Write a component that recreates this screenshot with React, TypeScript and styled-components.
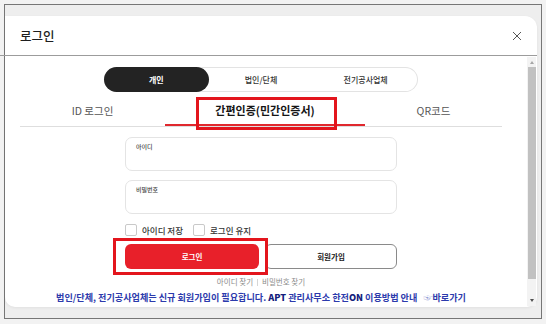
import React, { useState } from 'react'
import styled, { createGlobalStyle } from 'styled-components'

const GlobalStyle = createGlobalStyle`
  html, body {
    margin: 0;
    padding: 0;
    background: #f2f2f2;
  }
  body {
    font-family: 'Noto Sans CJK KR', 'Noto Sans', sans-serif;
    color: #222;
  }
  * {
    box-sizing: border-box;
  }
`

const Frame = styled.div`
  width: 538px;
  height: 315px;
  margin: 4px 0 0 4px;
  padding-top: 11px;

  border: 1px solid #767676;
  background: #eeeeee;
`

const Modal = styled.div`
  width: 532px;
  height: 291px;

  display: flex;
  flex-direction: column;

  background: #ffffff;
  border-radius: 0 12px 10px 10px;
  box-shadow: 0 1px 3px rgba(0, 0, 0, 0.06);
`

const Header = styled.div`
  position: relative;
  height: 40px;

  display: flex;
  align-items: center;
  justify-content: space-between;

  padding: 0 15px;
  border-bottom: 1px solid #9c9c9c;

  &::before {
    content: '';
    position: absolute;
    left: -5px;
    bottom: -1px;
    width: 5px;
    height: 1px;
    background: #9c9c9c;
  }
`

const Title = styled.h1`
  margin: 0;
  font-size: 12.5px;
  font-weight: 500;
  line-height: 16px;
  color: #1e1e1e;
`

const CloseButton = styled.button`
  width: 10px;
  height: 10px;
  padding: 0;
  border: none;
  background: none;
  display: flex;
  cursor: pointer;
`

const Body = styled.div`
  flex: 1;
  display: flex;
  min-height: 0;
`

const Content = styled.div`
  flex: 1;
  display: flex;
  flex-direction: column;
  align-items: center;
  padding: 11px 25px 0 15px;
`

const Segmented = styled.div`
  width: 314px;
  height: 25px;
  display: grid;
  grid-template-columns: repeat(3, 1fr);

  border-radius: 13px;
  box-shadow: inset 0 0 0 1px #e3e3e3;
`

type ActiveProps = {
  $active: boolean
}

const Segment = styled.button<ActiveProps>`
  border: none;
  padding: 0;
  border-radius: 13px;

  font-family: inherit;
  font-size: 8px;
  font-weight: ${props => (props.$active ? 700 : 500)};
  color: ${props => (props.$active ? '#ffffff' : '#333333')};
  background: ${props => (props.$active ? '#232323' : 'transparent')};
  cursor: pointer;
`

const TabRow = styled.div`
  width: 100%;
  display: flex;
  border-bottom: 1px solid #dedede;
`

const Tab = styled.button<ActiveProps & { $width: number }>`
  position: relative;
  width: ${props => props.$width}px;
  height: 34px;
  padding: 4px 0 0;

  border: none;
  border-bottom: 2px solid ${props => (props.$active ? '#e0282e' : 'transparent')};
  background: none;

  font-family: inherit;
  font-size: ${props => (props.$active ? '11px' : '10.5px')};
  font-weight: ${props => (props.$active ? 700 : 400)};
  color: ${props => (props.$active ? '#151515' : '#555555')};
  cursor: pointer;
`

const RedMark = styled.span<{ $left: number; $top: number; $w: number; $h: number }>`
  position: absolute;
  left: ${props => props.$left}px;
  top: ${props => props.$top}px;
  width: ${props => props.$w}px;
  height: ${props => props.$h}px;
  border: 3px solid #e3151d;
  pointer-events: none;
`

const Form = styled.div`
  width: 272px;
  display: flex;
  flex-direction: column;
`

const Field = styled.label<{ $gap: number }>`
  height: 34px;
  margin-top: ${props => props.$gap}px;
  padding: 5px 10px 0;

  display: flex;
  flex-direction: column;

  border: 1px solid #e4e4e4;
  border-radius: 7px;
`

const FieldLabel = styled.span`
  font-size: 6px;
  line-height: 8px;
  font-weight: 500;
  color: #444;
`

const FieldInput = styled.input`
  border: none;
  outline: none;
  padding: 0;
  height: 14px;
  font-family: inherit;
  font-size: 9px;
  background: transparent;
`

const CheckRow = styled.div`
  margin-top: 10px;
  height: 12px;
  display: flex;
  align-items: center;
  gap: 10px;
`

const CheckItem = styled.label`
  display: flex;
  align-items: center;
  gap: 5px;

  font-size: 8.5px;
  font-weight: 500;
  line-height: 12px;
  color: #333;
  cursor: pointer;
`

const CheckBox = styled.span`
  width: 12px;
  height: 12px;
  border: 1px solid #c9c9c9;
  border-radius: 2px;
  background: #fff;
`

const ButtonRow = styled.div`
  margin-top: 8px;
  display: flex;
  justify-content: space-between;
`

const LoginButton = styled.button`
  position: relative;
  width: 134px;
  height: 25px;

  border: none;
  border-radius: 6px;
  background: #e8202a;

  font-family: inherit;
  font-size: 7.5px;
  font-weight: 700;
  color: #fff;
  cursor: pointer;
`

const JoinButton = styled.button`
  width: 132px;
  height: 25px;

  border: 1px solid #8a8a8a;
  border-radius: 6px;
  background: #fff;

  font-family: inherit;
  font-size: 7.5px;
  font-weight: 700;
  color: #222;
  cursor: pointer;
`

const FindLinks = styled.div`
  margin-top: 8px;
  display: flex;
  justify-content: center;
  align-items: center;
  gap: 4px;

  font-size: 7.5px;
  line-height: 10px;
  color: #8a8a8a;
`

const Divider = styled.span`
  width: 1px;
  height: 7px;
  background: #d6d6d6;
`

const Notice = styled.p`
  margin: 5px 0 0;
  white-space: nowrap;

  font-size: 9.1px;
  line-height: 10px;
  font-weight: 600;
  color: #2c3aac;
`

const Strong = styled.b`
  font-weight: 800;
  color: #13207c;
`

const Hand = styled.span`
  font-weight: 400;
  color: #8b94d2;
  margin-left: 4px;
`

const Scrollbar = styled.div`
  width: 9px;
  margin: 1px 1px 1px 0;
  display: flex;
  flex-direction: column;
  background: #f3f3f3;
`

const ArrowBox = styled.div<{ $h: number }>`
  height: ${props => props.$h}px;
  display: flex;
  align-items: center;
  justify-content: center;
`

const Arrow = styled.span<{ $down?: boolean }>`
  width: 0;
  height: 0;
  border-left: 2.5px solid transparent;
  border-right: 2.5px solid transparent;
  ${props =>
    props.$down
      ? 'border-top: 3px solid #505050;'
      : 'border-bottom: 3px solid #a6a6a6;'}
`

const Thumb = styled.div`
  height: 212px;
  margin: 0 0.5px;
  background: #c1c1c1;
`

const Spacer = styled.div`
  flex: 1;
`

const segments = ['개인', '법인/단체', '전기공사업체']

const tabs = [
  { label: 'ID 로그인', width: 145 },
  { label: '간편인증(민간인증서)', width: 200 },
  { label: 'QR코드', width: 137 },
]

const App = () => {
  const [segment, setSegment] = useState(0)
  const [tab, setTab] = useState(1)

  return (
    <>
      <GlobalStyle />
      <Frame>
        <Modal>
          <Header>
            <Title>로그인</Title>
            <CloseButton aria-label="닫기">
              <svg width="10" height="10" viewBox="0 0 10 10">
                <path d="M1 1 L9 9 M9 1 L1 9" stroke="#444" strokeWidth="0.9" fill="none" />
              </svg>
            </CloseButton>
          </Header>
          <Body>
            <Content>
              <Segmented>
                {segments.map((s, i) => (
                  <Segment key={s} $active={segment === i} onClick={() => setSegment(i)}>
                    {s}
                  </Segment>
                ))}
              </Segmented>
              <TabRow>
                {tabs.map((t, i) => (
                  <Tab key={t.label} $width={t.width} $active={tab === i} onClick={() => setTab(i)}>
                    {t.label}
                    {i === 1 && <RedMark $left={31} $top={5} $w={141} $h={33} />}
                  </Tab>
                ))}
              </TabRow>
              <Form>
                <Field $gap={10}>
                  <FieldLabel>아이디</FieldLabel>
                  <FieldInput />
                </Field>
                <Field $gap={9}>
                  <FieldLabel>비밀번호</FieldLabel>
                  <FieldInput type="password" />
                </Field>
                <CheckRow>
                  <CheckItem>
                    <CheckBox />
                    아이디 저장
                  </CheckItem>
                  <CheckItem>
                    <CheckBox />
                    로그인 유지
                  </CheckItem>
                </CheckRow>
                <ButtonRow>
                  <LoginButton>
                    로그인
                    <RedMark $left={-12} $top={-6} $w={155} $h={37} />
                  </LoginButton>
                  <JoinButton>회원가입</JoinButton>
                </ButtonRow>
              </Form>
              <FindLinks>
                <span>아이디 찾기</span>
                <Divider />
                <span>비밀번호 찾기</span>
              </FindLinks>
              <Notice>
                법인/단체, 전기공사업체는 신규 회원가입이 필요합니다. <Strong>APT</Strong> 관리사무소 한전
                <Strong>ON</Strong> 이용방법 안내 <Hand>☞</Hand>바로가기
              </Notice>
            </Content>
            <Scrollbar>
              <ArrowBox $h={10}>
                <Arrow />
              </ArrowBox>
              <Thumb />
              <Spacer />
              <ArrowBox $h={12}>
                <Arrow $down />
              </ArrowBox>
            </Scrollbar>
          </Body>
        </Modal>
      </Frame>
    </>
  )
}

export default App
